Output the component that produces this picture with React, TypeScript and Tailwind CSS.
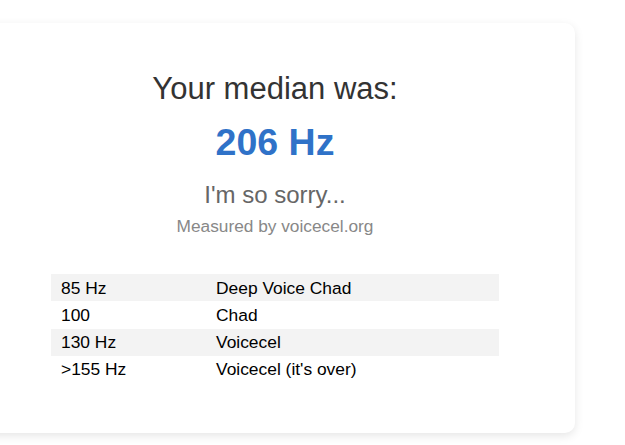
export default function App() {
  const rows = [
    ["85 Hz", "Deep Voice Chad"],
    ["100", "Chad"],
    ["130 Hz", "Voicecel"],
    [">155 Hz", "Voicecel (it's over)"],
  ];
  return (
    <div className="w-[625px] h-[445px] overflow-hidden bg-white pt-[23px]" style={{ fontFamily: '"Liberation Sans", Arial, sans-serif' }}>
      <div className="ml-[-25px] w-[600px] h-[410px] rounded-[10px] bg-white shadow-[0_3px_10px_rgba(0,0,0,0.1)] pt-[48px] flex flex-col items-center">
        <div className="text-[31px] leading-[35px] text-[#333]">Your median was:</div>
        <div className="mt-[15px] text-[37.5px] leading-[43px] font-bold text-[#2f72c8]">206 Hz</div>
        <div className="mt-[17px] text-[24px] leading-[27px] text-[#666]">I'm so sorry...</div>
        <div className="mt-[8px] text-[17.3px] leading-[20px] text-[#888]">Measured by voicecel.org</div>
        <div className="mt-[38px] w-[448px] flex flex-col text-[17.4px] text-black">
          {rows.map((r, i) => (
            <div key={i} className={`flex h-[27.3px] items-center ${i % 2 === 0 ? "bg-[#f3f3f3]" : ""}`}>
              <div className="w-[165px] pl-[10px]">{r[0]}</div>
              <div>{r[1]}</div>
            </div>
          ))}
        </div>
      </div>
    </div>
  );
}
